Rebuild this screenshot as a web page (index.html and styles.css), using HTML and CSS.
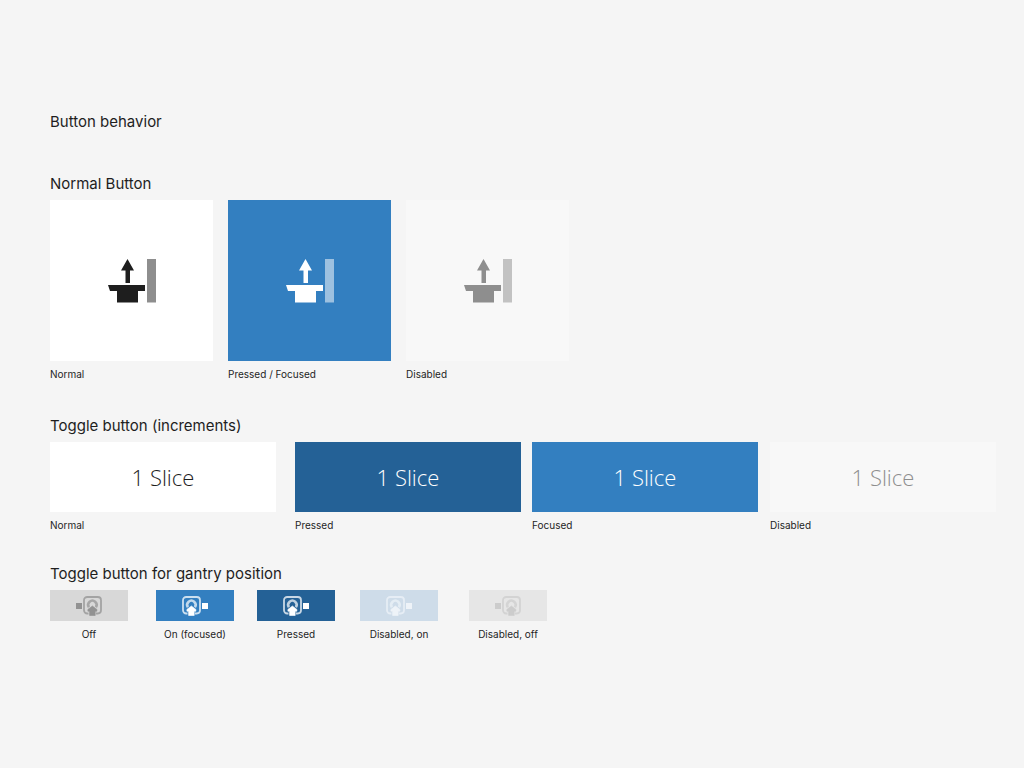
FILE: index.html
```html
<!DOCTYPE html>
<html lang="en">
<head>
<meta charset="utf-8">
<meta name="viewport" content="width=device-width, initial-scale=1">
<title>Button behavior</title>
<link rel="stylesheet" href="styles.css">
</head>
<body>
<svg class="defs" aria-hidden="true">
  <symbol id="table-up" viewBox="0 0 48 44">
    <path d="M19.500 0 26 11.500H22V24H17.500V11.500H13ZM0 26H37V32H30V43.500H9V32H2Z" fill="currentColor"/>
    <path class="column" d="M39 0H48V43.500H39Z"/>
  </symbol>
  <symbol id="gantry" viewBox="0 0 19 20">
    <path d="M5.500 17.500H4.200A3.200 3.200 0 0 1 1 14.300V4.200A3.200 3.200 0 0 1 4.200 1H14.800A3.200 3.200 0 0 1 18 4.200V14.300A3.200 3.200 0 0 1 14.800 17.500H13" fill="none" stroke="currentColor" stroke-width="1.800" opacity=".75"/>
    <path d="M5.900 11.200A4.200 4.200 0 1 1 12.900 11.200" fill="none" stroke="currentColor" stroke-width="2.600" opacity=".7"/>
    <path d="M9.400 10 13.900 13.400V15.200H12.200V19.500H6.600V15.200H4.900V13.400Z" fill="currentColor" stroke="currentColor" stroke-width=".6" stroke-linejoin="round"/>
  </symbol>
</svg>
<main class="page">
  <h1 class="title">Button behavior</h1>

  <section class="group">
    <h2 class="heading">Normal Button</h2>
    <div class="row row-normal">
      <div class="sample">
        <button class="btn tile normal" aria-labelledby="a1"><svg class="table-icon"><use href="#table-up"/></svg></button>
        <span class="label" id="a1">Normal</span>
      </div>
      <div class="sample">
        <button class="btn tile focused" aria-labelledby="a2"><svg class="table-icon"><use href="#table-up"/></svg></button>
        <span class="label" id="a2">Pressed / Focused</span>
      </div>
      <div class="sample">
        <button class="btn tile disabled" aria-labelledby="a3" disabled><svg class="table-icon"><use href="#table-up"/></svg></button>
        <span class="label" id="a3">Disabled</span>
      </div>
    </div>
  </section>

  <section class="group">
    <h2 class="heading">Toggle button (increments)</h2>
    <div class="row row-increments">
      <div class="sample">
        <button class="btn slice normal" aria-describedby="b1">1 Slice</button>
        <span class="label" id="b1">Normal</span>
      </div>
      <div class="sample">
        <button class="btn slice pressed" aria-describedby="b2" aria-pressed="true">1 Slice</button>
        <span class="label" id="b2">Pressed</span>
      </div>
      <div class="sample">
        <button class="btn slice focused" aria-describedby="b3">1 Slice</button>
        <span class="label" id="b3">Focused</span>
      </div>
      <div class="sample">
        <button class="btn slice disabled" aria-describedby="b4" disabled>1 Slice</button>
        <span class="label" id="b4">Disabled</span>
      </div>
    </div>
  </section>

  <section class="group">
    <h2 class="heading">Toggle button for gantry position</h2>
    <div class="row row-gantry">
      <div class="sample">
        <button class="btn gantry off" aria-labelledby="c1"><i class="dot"></i><svg class="gantry-icon"><use href="#gantry"/></svg></button>
        <span class="label" id="c1">Off</span>
      </div>
      <div class="sample">
        <button class="btn gantry focused" aria-labelledby="c2"><svg class="gantry-icon"><use href="#gantry"/></svg><i class="dot"></i></button>
        <span class="label" id="c2">On (focused)</span>
      </div>
      <div class="sample">
        <button class="btn gantry pressed" aria-labelledby="c3" aria-pressed="true"><svg class="gantry-icon"><use href="#gantry"/></svg><i class="dot"></i></button>
        <span class="label" id="c3">Pressed</span>
      </div>
      <div class="sample">
        <button class="btn gantry disabled-on" aria-labelledby="c4" disabled><svg class="gantry-icon"><use href="#gantry"/></svg><i class="dot"></i></button>
        <span class="label" id="c4">Disabled, on</span>
      </div>
      <div class="sample">
        <button class="btn gantry disabled-off" aria-labelledby="c5" disabled><i class="dot"></i><svg class="gantry-icon"><use href="#gantry"/></svg></button>
        <span class="label" id="c5">Disabled, off</span>
      </div>
    </div>
  </section>
</main>
</body>
</html>
```
FILE: styles.css
```css
* { box-sizing: border-box; }
body {
  margin: 0;
  background: #f5f5f5;
  color: #1e1e1e;
  font-family: Inter, "Liberation Sans", sans-serif;
}
.defs { position: absolute; width: 0; height: 0; }
.page {
  display: flex;
  flex-direction: column;
  padding: 112px 28px 40px 50px;
}
.title, .heading {
  margin: 0;
  font-size: 15px;
  line-height: 20px;
  font-weight: 400;
}
.title { margin-bottom: 42px; }
.group { margin-bottom: 31px; }
.heading { margin-bottom: 6px; }
.row { display: grid; }
.row-normal { grid-template-columns: repeat(3, 163px); gap: 15px; margin-bottom: 3px; }
.row-increments { grid-template-columns: 245fr 237fr 238fr 226fr; }
.row-increments .slice { width: 226px; }
.row-gantry { grid-template-columns: 106px 101px 103px 109px 78px; }
.sample { display: flex; flex-direction: column; }
.label {
  margin-top: 5px;
  font-size: 10px;
  line-height: 16px;
  white-space: nowrap;
}
.btn {
  display: flex;
  align-items: center;
  justify-content: center;
  border: 0;
  padding: 0;
  font-family: inherit;
}
.tile { height: 161px; }
.slice {
  height: 70px;
  font-family: "Open Sans", "Noto Sans", sans-serif;
  font-size: 22px;
  font-weight: 300;
}
.gantry { width: 78px; height: 31px; gap: 1px; }
.row-gantry .label { width: 78px; display: flex; justify-content: center; }
.normal { background: #fff; color: #1e1e1e; --column: #8e8e8e; }
.focused { background: #337fc0; color: #fff; --column: #9dc1e0; }
.pressed { background: #246196; color: #fff; }
.disabled { background: #f8f8f8; color: #8e8e8e; --column: #c2c2c2; }
.off { background: #d8d8d8; color: #929292; }
.disabled-on { background: #cedce9; color: #eef3f8; }
.disabled-off { background: #e6e6e6; color: #cccccc; }
.table-icon { width: 48px; height: 44px; }
.column { fill: var(--column); }
.gantry-icon { width: 19px; height: 20px; }
.dot { width: 6px; height: 6px; background: currentColor; }
```
